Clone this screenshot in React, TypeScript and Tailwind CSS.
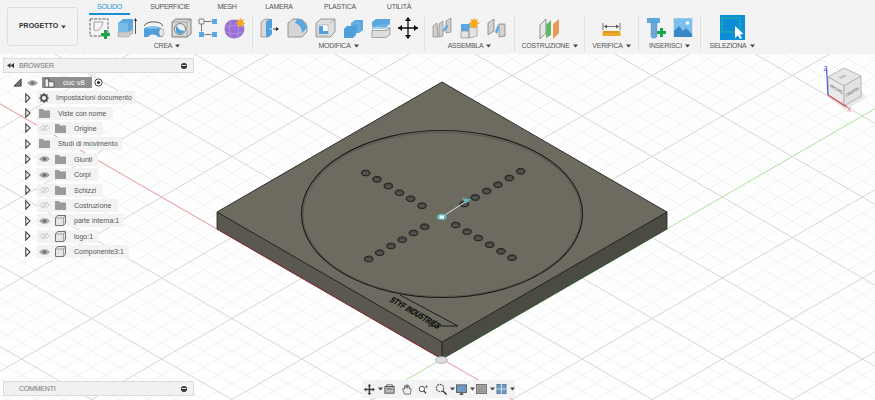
import React from "react";

const Caret = ({ c = "#444" }: { c?: string }) => (
  <svg width="5" height="4" viewBox="0 0 5 4" className="inline-block ml-[3px]"><polygon points="0,0.5 5,0.5 2.5,3.5" fill={c} /></svg>
);

const I = ({ w = 22, children }: { w?: number; children: React.ReactNode }) => (
  <svg width={w} height="22" viewBox={`0 0 ${w} 22`} className="shrink-0">{children}</svg>
);

const Sketch = () => (
  <I w={22}>
    <rect x="1" y="2" width="18" height="17" fill="#f4f4f4" stroke="#555" strokeWidth="0.9" strokeDasharray="3 1.2" />
    <path d="M5 5h9M5 5v7c0 2 2 2 4 1s4-3 5-8" fill="none" stroke="#888" strokeWidth="0.8" />
    <rect x="15" y="13" width="3" height="9" fill="#1ca64c" /><rect x="12" y="16" width="9" height="3" fill="#1ca64c" />
  </I>
);
const Extrude = () => (
  <I w={20}>
    <path d="M1 6l5-4h10v14l-5 4H1z" fill="#5ba8e0" />
    <path d="M1 6h10v9H1z" fill="#79bdec" />
    <path d="M1 15h10l5-3v4l-5 4H1z" fill="#c9c9c9" stroke="#999" strokeWidth="0.4" />
    <path d="M18.5 2v15" stroke="#333" strokeWidth="0.8" /><path d="M17 4l1.5-3 1.5 3z" fill="#222" />
  </I>
);
const Sweep = () => (
  <I w={22}>
    <path d="M1 9a10 6 0 0 1 19 0" fill="none" stroke="#444" strokeWidth="0.9" />
    <path d="M1 12c2-3 14-4 18 0l1 3v5h-5c-2-3-7-3-9-1l-1 1H1z" fill="#4f9fdc" />
    <path d="M3 11c3-2 11-2 14 0-3 1-11 1-14 0z" fill="#8ac4ee" />
    <ellipse cx="18.5" cy="15.5" rx="2.5" ry="4" fill="#e8e8e8" stroke="#888" strokeWidth="0.5" />
  </I>
);
const HoleI = () => (
  <I w={21}>
    <path d="M1 5l4-3h15v15l-4 3H1z" fill="#d6d6d6" stroke="#666" strokeWidth="0.8" />
    <path d="M1 5h15v15M16 5l4-3" fill="none" stroke="#888" strokeWidth="0.6" />
    <circle cx="9" cy="12" r="5.5" fill="#eee" stroke="#666" strokeWidth="0.8" />
    <path d="M5 12a4 4 0 0 0 8 1.5c-3 .3-6-.5-7-5a4 4 0 0 0-1 3.5z" fill="#4f9fdc" />
  </I>
);
const Pattern = () => (
  <I w={20}>
    <rect x="1" y="2" width="5" height="5" fill="none" stroke="#555" strokeWidth="0.8" rx="1" />
    <rect x="14" y="2" width="5" height="5" fill="#5ba8e0" />
    <rect x="1" y="15" width="5" height="5" fill="#5ba8e0" />
    <rect x="14" y="15" width="5" height="5" fill="#5ba8e0" />
    <path d="M6.5 4.5h7M3.5 7.5v7M6.5 17.5h7" stroke="#555" strokeWidth="0.8" />
  </I>
);
const Form = () => (
  <I w={22}>
    <path d="M1 12c0-6 4-9 9-9 6 0 10 4 10 9s-4 9-10 9-9-4-9-9z" fill="#9a6fd6" stroke="#7a55b5" strokeWidth="0.6" />
    <path d="M2 10c5-2 12-2 18 0M2 15c5 2 12 2 18 0M7 4c-2 5-2 12 0 16M13 4c2 5 2 12 0 16" fill="none" stroke="#c2a5ea" strokeWidth="0.6" />
    <path d="M16 0l1.2 3 3-1-1.3 3 2.6 1.5-2.8 1 .8 3-2.500-1.800L14 10.500l.5-3-2.800-1 2.600-1.400L13 2l3 1z" fill="#f8a81c" />
  </I>
);
const Press = () => (
  <I w={20}>
    <path d="M1 5l4-3h4l-1 3v15H1z" fill="#d9d9d9" stroke="#777" strokeWidth="0.6" />
    <path d="M6 5l3-3h3v15l-3 3H6z" fill="#4f9fdc" />
    <path d="M13 12h5" stroke="#222" strokeWidth="0.9" /><path d="M16 10l3 2-3 2z" fill="#222" />
    <path d="M9 12h3" stroke="#fff" strokeWidth="0.8" />
  </I>
);
const Fillet = () => (
  <I w={21}>
    <path d="M1 6l5-4h5c5 0 9 4 9 9v4l-5 5H1z" fill="#d6d6d6" stroke="#777" strokeWidth="0.7" />
    <path d="M10 2c5 0 10 4 10 9l-5 5c0-5-3-9-7-10z" fill="#5ba8e0" />
  </I>
);
const Shell = () => (
  <I w={21}>
    <path d="M1 6l5-4h14v13l-5 5H1z" fill="#dedede" stroke="#777" strokeWidth="0.7" />
    <path d="M3 8h10v10H3z" fill="#fff" stroke="#888" strokeWidth="0.5" />
    <path d="M4 9h4v5h5v3H4z" fill="#4f9fdc" />
    <path d="M15 6l4-3" stroke="#888" strokeWidth="0.6" />
  </I>
);
const Combine = () => (
  <I w={21}>
    <path d="M8 6l4-3h8v10l-4 3H8z" fill="#5ba8e0" />
    <path d="M1 12l3-3h9v9l-3 3H1z" fill="#4f9fdc" />
    <path d="M8 6h8v10" fill="none" stroke="#8ac4ee" strokeWidth="0.6" />
  </I>
);
const Split = () => (
  <I w={20}>
    <path d="M1 5l4-3h14v5l-4 3H1z" fill="#5ba8e0" />
    <path d="M1 10.500L19 7" stroke="#8ac4ee" strokeWidth="0.8" />
    <path d="M1 12l2-1h17" fill="none" stroke="#4f9fdc" strokeWidth="0.8" />
    <path d="M1 13.500h14l4-2v6l-4 3H1z" fill="#dedede" stroke="#777" strokeWidth="0.6" />
  </I>
);
const Move = () => (
  <I w={20}>
    <path d="M10 1v20M0 11h20" stroke="#111" strokeWidth="1.300" />
    <path d="M10 0l3 4H7zM10 22l3-4H7zM0 11l4-3v6zM20 11l-4-3v6z" fill="#111" />
  </I>
);
const Joint = ({ w = 21 }: { w?: number }) => (
  <I w={w}>
    <path d="M1 20V9l4-3 1 14zM7 20V7l4-3v15zM14 16V4l5-3v14z" fill="#cfcfcf" stroke="#777" strokeWidth="0.6" />
    <path d="M11 13l4-6 1 3-4 5z" fill="#5ba8e0" />
  </I>
);
const NewComp = () => (
  <I w={20}>
    <path d="M1 7h9v7H1z" fill="#5ba8e0" />
    <path d="M1 14h8v7H1zM9 11l8-1v9l-8 2z" fill="#e4e4e4" stroke="#888" strokeWidth="0.6" />
    <path d="M14 0l1 3 3-1-1 3 3 1-3 1.500 1 3-3-1-1 3-1.500-3-3 1 1-3-2-1.500 3-1-1-3 3 1z" fill="#f8a81c" />
  </I>
);
const Joint2 = () => (
  <I w={20}>
    <path d="M1 18V6l6-4v12zM12 20V7l6 0v12z" fill="#d3d3d3" stroke="#777" strokeWidth="0.7" />
    <path d="M8 15l3-8 1 4-2 6z" fill="#5ba8e0" />
  </I>
);
const Plane = () => (
  <I w={21}>
    <path d="M1 8l6-6v14l-6 6z" fill="#e8e8e8" stroke="#777" strokeWidth="0.8" />
    <path d="M7 8l5-5v15l-5 3z" fill="#5fb86a" />
    <path d="M14 7l6-5v14l-6 6z" fill="#e89a5a" />
  </I>
);
const Measure = () => (
  <I w={19}>
    <path d="M1 6v7M18 6v7" stroke="#555" strokeWidth="0.8" />
    <path d="M2 9.500h15" stroke="#555" strokeWidth="0.8" />
    <path d="M2 9.500l3-2v4zM17 9.500l-3-2v4z" fill="#555" />
    <rect x="0.500" y="14" width="18" height="5" fill="#edaa28" />
    <path d="M3 14v2M6 14v2M9 14v2M12 14v2M15 14v2" stroke="#9b6a0c" strokeWidth="0.6" />
  </I>
);
const Bolt = () => (
  <I w={20}>
    <path d="M0 1h13v5H0z" fill="#5ba8e0" />
    <path d="M4 6h6v13l-1 2H5l-1-2z" fill="#6fa8d6" stroke="#4d8bbd" strokeWidth="0.4" />
    <rect x="13" y="11" width="3" height="9" fill="#1ca64c" /><rect x="10" y="14" width="9" height="3" fill="#1ca64c" />
  </I>
);
const Picture = () => (
  <I w={20}>
    <rect x="0.500" y="1" width="19" height="19" fill="#7cc0ee" stroke="#e8e8e8" strokeWidth="0.6" />
    <circle cx="14.500" cy="6" r="1.800" fill="#fff" />
    <path d="M1 20v-6l5-5 4 5 3-3 6 6v3z" fill="#3b86c4" />
  </I>
);
const Select = () => (
  <div className="w-[25px] h-[25px] bg-[#0a8fd6] flex items-center justify-center">
    <svg width="25" height="25" viewBox="0 0 25 25">
      <rect x="2" y="3" width="18" height="14" fill="none" stroke="#46c46e" strokeWidth="1" strokeDasharray="2 1.300" />
      <path d="M15 11v12l3-2.500 2 3.500 2-1-2-3.500 3.500-.5z" fill="#fff" />
    </svg>
  </div>
);

const Group = ({ label, className, children }: { label: string; className: string; children: React.ReactNode }) => (
  <div className={`flex flex-col items-center h-[35px] border-r border-[#e0e0e0] shrink-0 ${className}`}>
    <div className="flex items-center h-[23px] shrink-0">{children}</div>
    <div className="mt-[2px] text-[7px] tracking-[-0.25px] leading-[10px] text-[#555] whitespace-nowrap flex items-center">{label}<Caret /></div>
  </div>
);

const Eye = ({ on }: { on: boolean }) => (
  <svg width="11" height="8" viewBox="0 0 12 9" className="shrink-0">
    <path d="M0.500 4.500C3 1 9 1 11.500 4.500 9 8 3 8 0.500 4.500z" fill={on ? "#a8a8a8" : "none"} stroke={on ? "#999" : "#c4c4c4"} strokeWidth="0.9" />
    <circle cx="6" cy="4.500" r="1.800" fill={on ? "#666" : "#d8d8d8"} />
    {!on && <path d="M2 8L10 1" stroke="#c4c4c4" strokeWidth="0.8" />}
  </svg>
);
const Folder = () => (
  <svg width="11" height="9" viewBox="0 0 11 9" className="shrink-0"><path d="M0 0h4l1 1.500h6V9H0z" fill="#9b9b9b" /></svg>
);
const Gear = () => (
  <svg width="10" height="10" viewBox="0 0 10 10" className="shrink-0">
    <circle cx="5" cy="5" r="3" fill="none" stroke="#555" strokeWidth="1.800" />
    <path d="M5 0v2M5 8v2M0 5h2M8 5h2M1.500 1.500l1.400 1.400M7.100 7.100l1.400 1.400M1.500 8.500l1.400-1.400M7.100 2.900l1.400-1.400" stroke="#555" strokeWidth="1.200" />
  </svg>
);
const Body = () => (
  <svg width="11" height="11" viewBox="0 0 11 11" className="shrink-0">
    <path d="M0.500 3l2-2.500h8V8l-2 2.500H0.500z" fill="#e6e6e6" stroke="#666" strokeWidth="0.9" />
    <path d="M0.500 3h8v7.500M8.500 3l2-2.500" fill="none" stroke="#777" strokeWidth="0.6" />
  </svg>
);
const Tri = () => (
  <svg width="6" height="10" viewBox="0 0 6 10" className="shrink-0"><path d="M0.800 0.800L5 5 0.800 9.200z" fill="#fff" stroke="#444" strokeWidth="1.100" /></svg>
);

type Row = { t: string; w: number; icon: "folder" | "gear" | "body"; eye?: boolean; pl?: number };
const rows: Row[] = [
  { t: "Impostazioni documento", w: 98, icon: "gear", pl: 19 },
  { t: "Viste con nome", w: 76, icon: "folder", pl: 21 },
  { t: "Origine", w: 66, icon: "folder", eye: false },
  { t: "Studi di movimento", w: 85, icon: "folder", pl: 21 },
  { t: "Giunti", w: 61, icon: "folder", eye: true },
  { t: "Corpi", w: 61, icon: "folder", eye: true },
  { t: "Schizzi", w: 66, icon: "folder", eye: false },
  { t: "Costruzione", w: 81, icon: "folder", eye: false },
  { t: "parte interna:1", w: 87, icon: "body", eye: true },
  { t: "logo:1", w: 61, icon: "body", eye: false },
  { t: "Componente3:1", w: 92, icon: "body", eye: true },
];

const TreeRow = ({ r }: { r: Row }) => (
  <div className="flex items-center h-[15.4px] pl-[25px]">
    <div className="w-[12px] flex"><Tri /></div>
    <div className="relative flex items-center h-[13px] bg-[#f3f3f3]" style={{ width: r.w }}>
      {r.eye !== undefined ? (
        <>
          <div className="w-[18px] pl-[2px] flex"><Eye on={r.eye} /></div>
          <div className="w-[19px] flex">{r.icon === "body" ? <Body /> : <Folder />}</div>
        </>
      ) : (
        <div className="pl-[2px] flex">{r.icon === "gear" ? <Gear /> : <Folder />}</div>
      )}
      <span className="text-[7px] leading-none text-[#555] whitespace-nowrap" style={r.pl ? { position: "absolute", left: r.pl } : undefined}>{r.t}</span>
    </div>
  </div>
);

const Grid = () => {
  const k = 0.578;
  const S = 16.2;
  const minor: React.ReactNode[] = [];
  const major: React.ReactNode[] = [];
  for (let i = -60; i <= 60; i++) {
    const isMajor = ((i % 5) + 5) % 5 === 0;
    const c = i * S;
    const stroke = isMajor ? "#d6d6d6" : "#efefef";
    const w = isMajor ? 1 : 0.8;
    const target = isMajor ? major : minor;
    target.push(<line key={`a${i}`} x1={0} y1={359 + c - k * 442} x2={875} y2={359 + c + k * 433} stroke={stroke} strokeWidth={w} />);
    target.push(<line key={`b${i}`} x1={0} y1={359 + c + k * 442} x2={875} y2={359 + c - k * 433} stroke={stroke} strokeWidth={w} />);
  }
  return <g>{minor}{major}</g>;
};

const holes: [number, number][] = [
  [365.7, 173], [377, 179.300], [388.300, 186], [399.500, 192.700], [410.700, 198.700], [422, 205.700],
  [520.700, 171.300], [509.300, 178], [498, 184.700], [486.700, 191], [475.300, 197.500], [464.300, 204],
  [424.700, 226.700], [413.500, 233], [402.300, 239.700], [391, 246], [379.700, 252.700], [368.700, 259],
  [455.700, 225], [467, 231.700], [478.300, 238], [489.700, 244.700], [501, 251.300], [512, 257.700],
];

const Scene = () => (
  <svg className="absolute inset-0" width="875" height="346" viewBox="0 54 875 346">
    <rect x="0" y="54" width="875" height="346" fill="#fefefe" />
    <Grid />
    <line x1="0" y1="104" x2="875" y2="609" stroke="#f5a3a3" strokeWidth="1" />
    <line x1="442" y1="359" x2="875" y2="108.700" stroke="#b6efa8" strokeWidth="1" />
    <line x1="442" y1="359" x2="370" y2="401" stroke="#b6efa8" strokeWidth="1" />
    <path d="M217 212L442 342V359L217 229z" fill="#5a5850" stroke="#222" strokeWidth="0.8" />
    <path d="M667 212L442 342V359L667 229z" fill="#4b4a43" stroke="#222" strokeWidth="0.8" />
    <path d="M442 82L667 212L442 342L217 212z" fill="#6d6a5f" stroke="#222" strokeWidth="0.9" />
    <path d="M217 229L442 359" stroke="#a8323a" strokeWidth="0.7" fill="none" />
    <path d="M442 359L667 229" stroke="#3f8f4a" strokeWidth="0.5" fill="none" />
    <ellipse cx="442" cy="214" rx="140.500" ry="83.500" fill="none" stroke="#1c1c1c" strokeWidth="1.200" />
    <ellipse cx="442" cy="214.500" rx="139" ry="82" fill="#6d6a5f" stroke="#4a4840" strokeWidth="0.6" />
    {holes.map(([x, y], i) => (
      <g key={i}>
        <ellipse cx={x} cy={y} rx="4.300" ry="2.800" fill="#444440" stroke="#111" strokeWidth="0.8" />
        <ellipse cx={x} cy={y + 0.500} rx="2.800" ry="1.300" fill="#55544f" />
      </g>
    ))}
    <line x1="442" y1="217" x2="465" y2="202" stroke="#cfe2e2" strokeWidth="1" />
    <path d="M462 198l9 1.500-5.500 4z" fill="#62b8bd" />
    <ellipse cx="441.700" cy="217" rx="5" ry="3.200" fill="#62b8bd" />
    <rect x="439.500" y="215.500" width="4.500" height="3" fill="#fff" />
    <path d="M400 295L458 326H428" fill="none" stroke="#1c1c1c" strokeWidth="1" />
    <text transform="matrix(0.866 0.5 -0.6 0.6 389 301)" fontSize="10.500" fontWeight="700" fill="#0c0c0c" stroke="#0c0c0c" strokeWidth="0.3" fontFamily="'Liberation Sans', sans-serif" textLength="56" lengthAdjust="spacingAndGlyphs">STYF INDUSTRIES</text>
    <ellipse cx="441.500" cy="360" rx="6" ry="3.500" fill="#dcdcdc" stroke="#999" strokeWidth="0.6" />
    {/* view cube */}
    <path d="M828 97L845 110L866 97L861 90L845 100z" fill="#cfcfcf" opacity="0.45" />
    <path d="M828 77L844 68L861 76L844 86z" fill="#e6e6e6" stroke="#b0b0b0" strokeWidth="0.9" />
    <path d="M828 77L844 86V106L828 95z" fill="#e9e9e9" stroke="#b0b0b0" strokeWidth="0.9" />
    <path d="M844 86L861 76V96L844 106z" fill="#e2e2e2" stroke="#b0b0b0" strokeWidth="0.9" />
    <text transform="matrix(1 0.58 0 1 830 87)" fontSize="4.500" fill="#777" fontFamily="'Liberation Sans', sans-serif" textLength="13">FRONTE</text>
    <text transform="matrix(1 -0.58 0 1 846 97)" fontSize="4.500" fill="#777" fontFamily="'Liberation Sans', sans-serif" textLength="13">DESTRA</text>
    <text transform="matrix(0.9 -0.5 0.9 0.5 841 79)" fontSize="4.500" fill="#888" fontFamily="'Liberation Sans', sans-serif">SU</text>
    <line x1="826.500" y1="68" x2="828" y2="95" stroke="#4a5be0" strokeWidth="1.200" />
    <line x1="828" y1="95" x2="847" y2="107" stroke="#d84a4a" strokeWidth="1.200" />
    <text x="823.500" y="71" fontSize="6.500" fill="#4a5be0" fontFamily="'Liberation Sans', sans-serif">Z</text>
    <text x="847" y="112" fontSize="6.500" fill="#e06a6a" fontFamily="'Liberation Sans', sans-serif">X</text>
  </svg>
);

const PanelBar = ({ label, cls }: { label: string; cls: string }) => (
  <div className={`absolute left-[3px] w-[191px] h-[15px] bg-[#f1f1f1] border border-[#dcdcdc] flex items-center ${cls}`}>
    {label === "BROWSER" && (
      <svg width="7" height="5" viewBox="0 0 7 5" className="absolute left-[3px]"><path d="M3.500 0v5L0 2.500zM7 0v5L3.500 2.500z" fill="#333" /></svg>
    )}
    <span className="absolute left-[15px] text-[7px] tracking-[-0.2px] leading-none text-[#777]">{label}</span>
    <div className="absolute right-[6px] w-[6px] h-[6px] rounded-full bg-[#333] flex items-center justify-center">
      <div className="w-[4px] h-[1px] bg-[#eee]" />
    </div>
  </div>
);

const NavCaret = () => <div className="w-[8px] flex justify-start shrink-0"><Caret /></div>;

const NavIcons = () => (
  <div className="absolute left-[362px] top-[326px] w-[153px] h-[18px] bg-[#f3f3f3] flex items-center pl-[2px]">
    <svg width="11" height="11" viewBox="0 0 13 13" className="shrink-0"><path d="M6.500 0l2 2.500H7.300V5.500h3V4l2.500 2.500L10.300 9V7.500h-3v3H9L6.500 13 4 10.500h1.500v-3h-3V9L0 6.500 2.500 4v1.500h3V2.500H4z" fill="#3a4048" /></svg>
    <NavCaret />
    <svg width="11" height="10" viewBox="0 0 13 12" className="shrink-0 ml-[1px]"><rect x="1" y="3" width="11" height="8" fill="#bbb" stroke="#444" strokeWidth="1" /><path d="M3 3V1h7v2M3 6h7" stroke="#444" strokeWidth="0.9" fill="none" /></svg>
    <svg width="10" height="11" viewBox="0 0 12 13" className="shrink-0 ml-[7px]"><path d="M3 12L1 7V5l2 1V2l1.500 0 .5 3V1h1.500l.5 4V2h1.500l.5 4 1-1 1 .5L10 12z" fill="#eee" stroke="#555" strokeWidth="0.9" /></svg>
    <svg width="10" height="10" viewBox="0 0 13 12" className="shrink-0 ml-[6px]"><circle cx="5" cy="6" r="3.500" fill="#fff" stroke="#444" strokeWidth="1.200" /><path d="M7.500 8.500L10.500 11.500" stroke="#333" strokeWidth="1.500" /><path d="M11 1v4M9 3h4" stroke="#555" strokeWidth="0.9" /></svg>
    <svg width="12" height="12" viewBox="0 0 13 13" className="shrink-0 ml-[7px]"><circle cx="5.500" cy="5.500" r="4" fill="#eef3f7" stroke="#444" strokeWidth="1.200" strokeDasharray="2 1" /><path d="M8.500 8.500L12.500 12.500" stroke="#333" strokeWidth="1.600" /></svg>
    <NavCaret />
    <svg width="11" height="11" viewBox="0 0 13 13" className="shrink-0 ml-[1px]"><rect x="0.500" y="1" width="12" height="9" fill="#6f98c2" stroke="#555" strokeWidth="1" /><path d="M5 10h3l1 3H4z" fill="#666" /></svg>
    <NavCaret />
    <svg width="11" height="10" viewBox="0 0 13 12" className="shrink-0 ml-[1px]"><rect x="0.500" y="0.500" width="12" height="11" fill="#aaa" stroke="#666" strokeWidth="1" /><path d="M3.500 0v12M6.500 0v12M9.500 0v12M0 3.500h13M0 6.500h13M0 9h13" stroke="#808080" strokeWidth="0.6" /></svg>
    <NavCaret />
    <svg width="11" height="10" viewBox="0 0 12 12" className="shrink-0 ml-[1px]"><rect x="0.500" y="0.500" width="11" height="11" fill="#6f98c2" stroke="#557aa0" strokeWidth="1" /><path d="M6 0v12M0 6h12" stroke="#e6eef6" strokeWidth="1" /></svg>
    <NavCaret />
  </div>
);

const Tab = ({ t, w, active }: { t: string; w: number; active?: boolean }) => (
  <div className={`h-[15px] pt-[1px] shrink-0 text-center text-[7px] tracking-[-0.25px] leading-[12px] whitespace-nowrap ${active ? "text-[#1b8fd0] border-b-2 border-[#1b8fd0]" : "text-[#555]"}`} style={{ width: w }}>{t}</div>
);

export default function App() {
  return (
    <div className="relative w-[875px] h-[400px] overflow-hidden flex flex-col bg-white font-['Liberation_Sans',sans-serif]">
      <header className="h-[54px] bg-[#f3f3f3] flex shrink-0 relative z-10">
        <div className="ml-[7px] mt-[7px] w-[71px] h-[39px] border border-[#dedede] rounded-[3px] flex items-center justify-center text-[7px] text-[#333] font-bold shrink-0">
          PROGETTO<Caret />
        </div>
        <div className="ml-[11px] flex flex-col">
          <div className="flex h-[15px]">
            <Tab t="SOLIDO" w={41} active />
            <Tab t="SUPERFICIE" w={80} />
            <Tab t="MESH" w={34} />
            <Tab t="LAMERA" w={70} />
            <Tab t="PLASTICA" w={52} />
            <Tab t="UTILITÀ" w={66} />
          </div>
          <div className="flex mt-[1px]">
            <Group label="CREA" className="w-[164px] pr-[7px]">
              <div className="flex gap-[6px] items-center"><Sketch /><Extrude /><Sweep /><HoleI /><Pattern /><Form /></div>
            </Group>
            <Group label="MODIFICA" className="w-[172px]">
              <div className="flex gap-[7px] items-center"><Press /><Fillet /><Shell /><Combine /><Split /><Move /></div>
            </Group>
            <Group label="ASSEMBLA" className="w-[90px]">
              <div className="flex gap-[7px] items-center"><Joint /><NewComp /><Joint2 /></div>
            </Group>
            <Group label="COSTRUZIONE" className="w-[70px]"><Plane /></Group>
            <Group label="VERIFICA" className="w-[54px]"><Measure /></Group>
            <Group label="INSERISCI" className="w-[62px]">
              <div className="flex gap-[6px] items-center"><Bolt /><Picture /></div>
            </Group>
            <div className="flex flex-col items-center w-[62px] h-[35px] shrink-0">
              <div className="h-[23px] flex items-center shrink-0"><Select /></div>
              <div className="mt-[2px] text-[7px] tracking-[-0.25px] leading-[10px] text-[#555] whitespace-nowrap flex items-center">SELEZIONA<Caret /></div>
            </div>
          </div>
        </div>
      </header>
      <main className="relative flex-1">
        <Scene />
        <PanelBar label="BROWSER" cls="top-[4px]" />
        <div className="absolute left-0 top-[20px] w-[200px]">
          <div className="flex items-center h-[17px] pl-[13px]">
            <svg width="9" height="9" viewBox="0 0 10 10" className="shrink-0"><path d="M9 1v8H1z" fill="#777" stroke="#333" strokeWidth="1" /></svg>
            <div className="ml-[5px] w-[15px] flex"><Eye on /></div>
            <div className="flex items-center h-[11px] w-[50px] bg-[#8f8f8f]">
              <svg width="11" height="10" viewBox="0 0 12 11" className="shrink-0 ml-[2px]"><path d="M1 10V1h4l1 3h4l1 2v4z" fill="#eee" stroke="#444" strokeWidth="0.8" /><path d="M5 1v9" stroke="#444" strokeWidth="0.8" /></svg>
              <span className="ml-[8px] text-[7.500px] leading-none text-white">cuc v8</span>
            </div>
            <svg width="9" height="9" viewBox="0 0 10 10" className="shrink-0 ml-[2px]"><circle cx="5" cy="5" r="4" fill="#fff" stroke="#333" strokeWidth="1" /><circle cx="5" cy="5" r="1.800" fill="#333" /></svg>
          </div>
          <div className="-mt-[1px]">
            {rows.map((r) => <TreeRow key={r.t} r={r} />)}
          </div>
        </div>
        <PanelBar label="COMMENTI" cls="top-[327px]" />
        <NavIcons />
      </main>
    </div>
  );
}
